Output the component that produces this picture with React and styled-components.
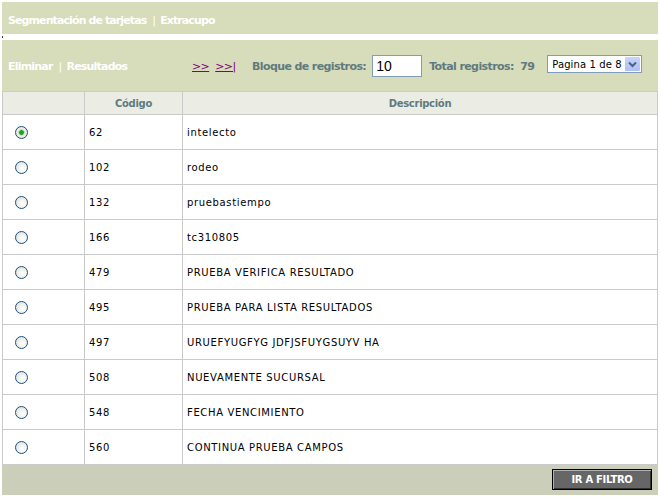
import { createGlobalStyle, styled } from "styled-components";

const rows = [
  { code: "62", desc: "intelecto", checked: true },
  { code: "102", desc: "rodeo" },
  { code: "132", desc: "pruebastiempo" },
  { code: "166", desc: "tc310805" },
  { code: "479", desc: "PRUEBA VERIFICA RESULTADO" },
  { code: "495", desc: "PRUEBA PARA LISTA RESULTADOS" },
  { code: "497", desc: "URUEFYUGFYG JDFJSFUYGSUYV HA" },
  { code: "508", desc: "NUEVAMENTE SUCURSAL" },
  { code: "548", desc: "FECHA VENCIMIENTO" },
  { code: "560", desc: "CONTINUA PRUEBA CAMPOS" },
];

function App() {
  return (
    <>
      <GlobalStyle />
      <StPage>
        <StTitleBar>
          Segmentación de tarjetas<StSep>|</StSep>Extracupo
        </StTitleBar>
        <StGap>
          <StMark />
        </StGap>
        <StToolBar>
          <StActions>
            Eliminar<StSep>|</StSep>Resultados
          </StActions>
          <StNav>
            <StNavLink href="#">&gt;&gt;</StNavLink>
            <StNavLink href="#">&gt;&gt;|</StNavLink>
          </StNav>
          <StLabel>Bloque de registros:</StLabel>
          <StInput defaultValue="10" />
          <StLabel>Total registros:&nbsp; 79</StLabel>
          <StSelect>
            <span>Pagina 1 de 8</span>
            <StSelectBtn>
              <svg width="9" height="7" viewBox="0 0 9 7">
                <path d="M1 1.5 L4.5 5 L8 1.5" stroke="#4d6185" strokeWidth="2" fill="none" />
              </svg>
            </StSelectBtn>
          </StSelect>
        </StToolBar>
        <StTable>
          <colgroup>
            <col style={{ width: 82 }} />
            <col style={{ width: 98 }} />
            <col />
          </colgroup>
          <thead>
            <tr>
              <StTh></StTh>
              <StTh>Código</StTh>
              <StTh>Descripción</StTh>
            </tr>
          </thead>
          <tbody>
            {rows.map((r) => (
              <tr key={r.code}>
                <StTd $radio>
                  <StRadio $checked={r.checked} />
                </StTd>
                <StTd>{r.code}</StTd>
                <StTd>{r.desc}</StTd>
              </tr>
            ))}
          </tbody>
        </StTable>
        <StFooter>
          <StButton>IR A FILTRO</StButton>
        </StFooter>
      </StPage>
    </>
  );
}

export default App;

const GlobalStyle = createGlobalStyle`
  body {
    margin: 0;
    background: #ffffff;
    font-family: "DejaVu Sans", Verdana, sans-serif;
  }
`;

const StPage = styled.div`
  margin: 2px 3px 0 2px;
  width: 656px;
`;

const StTitleBar = styled.div`
  height: 32px;
  background: #d7dcba;
  color: #ffffff;
  font-weight: bold;
  font-size: 11px;
  letter-spacing: -0.9px;
  display: flex;
  align-items: center;
  padding-left: 6px;
  padding-top: 4px;
  box-sizing: border-box;
`;

const StSep = styled.span`
  font-weight: normal;
  margin: 0 5px 0 6px;
`;

const StGap = styled.div`
  height: 6px;
  display: flex;
  align-items: center;
`;

const StMark = styled.span`
  width: 1px;
  height: 2px;
  background: #333;
`;

const StToolBar = styled.div`
  height: 51px;
  background: #d7dcba;
  display: flex;
  align-items: center;
  padding-left: 6px;
  padding-top: 1px;
  box-sizing: border-box;
  font-size: 11px;
  font-weight: bold;
  letter-spacing: -0.6px;
`;

const StActions = styled.div`
  color: #ffffff;
  width: 184px;
  letter-spacing: -0.8px;
`;

const StNav = styled.div`
  display: flex;
  gap: 6px;
  width: 60px;
  font-weight: normal;
  letter-spacing: -0.6px;
`;

const StNavLink = styled.a`
  color: #800080;
  font-size: 11px;
  text-decoration: underline;
`;

const StLabel = styled.span`
  color: #5f7b7f;
  margin-right: 6px;
`;

const StInput = styled.input`
  width: 50px;
  height: 22px;
  box-sizing: border-box;
  border: 1px solid #7f9db9;
  font-family: "Liberation Sans", Arial, sans-serif;
  font-size: 14px;
  padding: 1px 3px;
  margin-right: 7px;
  outline: none;
`;

const StSelect = styled.div`
  margin-left: 7px;
  margin-bottom: 4px;
  width: 95px;
  height: 18px;
  box-sizing: border-box;
  border: 1px solid #7f9db9;
  background: #ffffff;
  display: flex;
  align-items: center;
  justify-content: space-between;
  padding-left: 4px;
  font-weight: normal;
  font-size: 10px;
  letter-spacing: 0.1px;
  color: #000;
`;

const StSelectBtn = styled.span`
  width: 15px;
  height: 14px;
  margin-right: 1px;
  background: linear-gradient(#c6d5fc, #aebff5);
  border-radius: 1px;
  display: flex;
  align-items: center;
  justify-content: center;
`;

const StTable = styled.table`
  width: 100%;
  border-collapse: collapse;
  table-layout: fixed;
  font-size: 10px;
  border-left: 1px solid #cacaca;
  border-right: 1px solid #cacaca;
`;

const StTh = styled.th`
  height: 22px;
  padding: 0;
  background: #ebece4;
  color: #5f7b7f;
  font-size: 10px;
  font-weight: bold;
  letter-spacing: -0.3px;
  text-align: center;
  border: 1px solid #cacaca;
`;

const StTd = styled.td`
  height: 34px;
  border: 1px solid #cacaca;
  color: #000;
  text-align: left;
  letter-spacing: 0.65px;
  padding: 0 0 0 ${(p) => (p.$radio ? "12px" : "4px")};
`;

const StRadio = styled.span`
  display: block;
  width: 11px;
  height: 11px;
  border-radius: 50%;
  border: 1px solid #1d5281;
  background: ${(p) =>
    p.$checked
      ? "radial-gradient(circle, #21a121 0 2px, #8fd08f 2.5px, #eeeee8 3.5px, #dcdcd4 100%)"
      : "radial-gradient(circle at 60% 60%, #ffffff 0, #f2f2ee 40%, #d8d8d0 100%)"};
`;

const StFooter = styled.div`
  height: 30px;
  box-sizing: border-box;
  background: #cbcfba;
  display: flex;
  align-items: flex-start;
  justify-content: flex-end;
  padding: 4px 6px 0 0;
`;

const StButton = styled.button`
  width: 100px;
  height: 21px;
  background: #666666;
  color: #ffffff;
  border: 1px solid #000;
  box-shadow: inset 1px 1px 0 #b0b0b0, inset -1px -1px 0 #333;
  font-family: "DejaVu Sans", Verdana, sans-serif;
  font-size: 10px;
  font-weight: bold;
  letter-spacing: -0.3px;
  padding: 0;
`;
